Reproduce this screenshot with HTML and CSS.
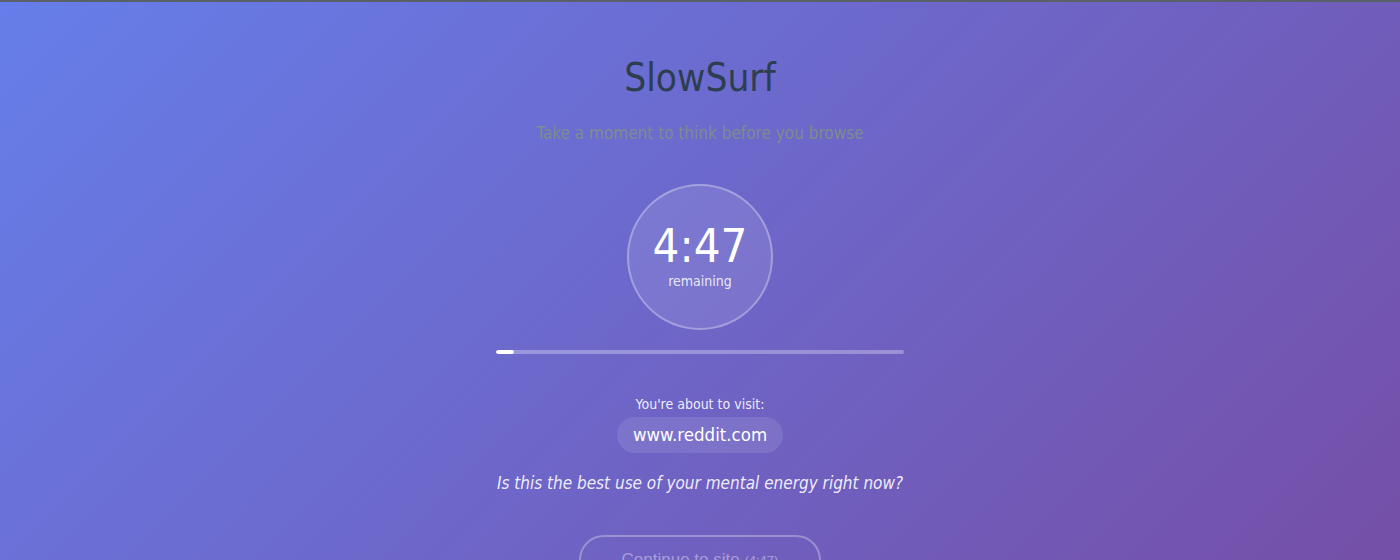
FILE: index.html
```html
<!DOCTYPE html>
<html lang="en">
<head>
<meta charset="utf-8">
<title>SlowSurf</title>
<link rel="stylesheet" href="styles.css">
</head>
<body>
<main class="page">
  <h1 class="title">SlowSurf</h1>
  <p class="subtitle">Take a moment to think before you browse</p>
  <div class="timer">
    <div class="timer-value">4:47</div>
    <div class="timer-label">remaining</div>
  </div>
  <div class="progress"><div class="progress-fill" style="width: 4.33%"></div></div>
  <p class="visit-label">You're about to visit:</p>
  <div class="site">www.reddit.com</div>
  <p class="question">Is this the best use of your mental energy right now?</p>
  <button class="continue" disabled>Continue to site <span class="countdown">(4:47)</span></button>
</main>
</body>
</html>
```
FILE: styles.css
```css
html, body {
  margin: 0;
  padding: 0;
}
body {
  font-family: "DejaVu Sans Condensed", "DejaVu Sans", sans-serif;
  background: linear-gradient(135deg, #667eea 0%, #764ba2 100%);
  border-top: 2px solid #5a6068;
  color: #fff;
}
.page {
  display: flex;
  flex-direction: column;
  align-items: center;
  text-align: center;
  padding-bottom: 140px;
}
.title {
  margin: 52px 0 0;
  font-size: 38.5px;
  font-weight: normal;
  line-height: 48px;
  color: #2c3e50;
}
.subtitle {
  margin: 21px 0 0;
  font-size: 17px;
  line-height: 20px;
  color: #7f8c8d;
}
.timer {
  margin: 41px 0 0;
  width: 146px;
  height: 146px;
  box-sizing: border-box;
  border: 2px solid rgba(255, 255, 255, 0.3);
  border-radius: 50%;
  background: rgba(255, 255, 255, 0.1);
  display: flex;
  flex-direction: column;
  align-items: center;
  justify-content: center;
}
.timer-value {
  font-size: 47px;
  line-height: 52px;
  margin-top: -4px;
}
.timer-label {
  font-size: 14px;
  line-height: 18px;
  color: rgba(255, 255, 255, 0.85);
}
.progress {
  margin: 20px 0 0;
  width: 408px;
  height: 4px;
  border-radius: 2px;
  background: rgba(255, 255, 255, 0.3);
  overflow: hidden;
}
.progress-fill {
  height: 100%;
  background: #fff;
  border-radius: 2px;
}
.visit-label {
  margin: 41px 0 0;
  font-size: 14px;
  line-height: 18px;
  color: rgba(255, 255, 255, 0.9);
}
.site {
  margin: 4px 0 0;
  padding: 0 16px;
  height: 36px;
  line-height: 36px;
  border-radius: 18px;
  background: rgba(255, 255, 255, 0.1);
  font-size: 18.5px;
  color: #fff;
}
.question {
  margin: 20px 0 0;
  font-size: 17px;
  line-height: 20px;
  font-style: italic;
  color: rgba(255, 255, 255, 0.9);
}
.continue {
  margin: 42px 0 0;
  width: 242px;
  height: 50px;
  border: 2px solid rgba(255, 255, 255, 0.3);
  border-radius: 25px;
  background: transparent;
  font-family: "Liberation Sans", Arial, sans-serif;
  font-size: 17px;
  color: rgba(255, 255, 255, 0.4);
}
.countdown {
  font-size: 13px;
}
```
